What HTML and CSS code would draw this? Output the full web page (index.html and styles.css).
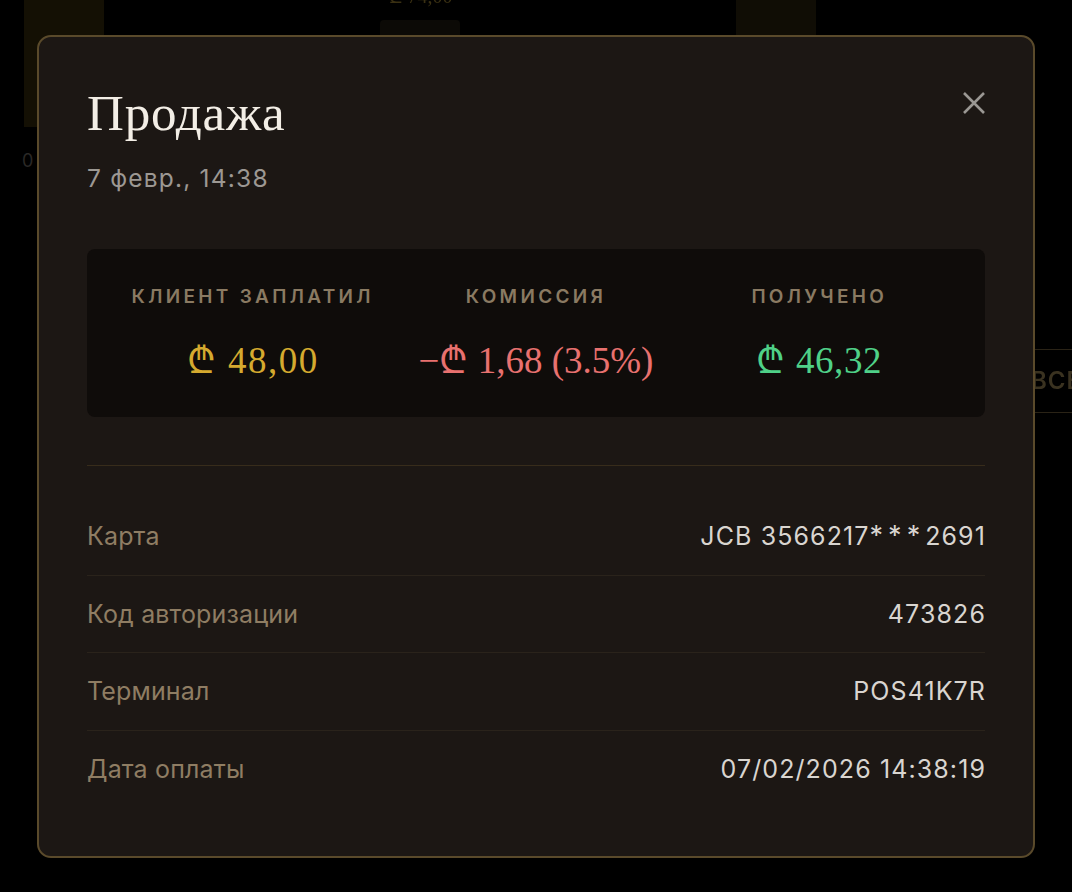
FILE: index.html
```html
<!DOCTYPE html>
<html lang="ru">
<head>
<meta charset="utf-8">
<title>Продажа</title>
<link rel="stylesheet" href="styles.css">
</head>
<body>
<div class="backdrop">
  <div class="chart">
    <div class="bar bar-a"></div>
    <div class="bar-label">₾ 74,00</div>
    <div class="bar bar-b"></div>
    <div class="bar bar-c"></div>
    <div class="axis">0</div>
  </div>
  <div class="bg-button">ВСЕ</div>
</div>

<div class="modal" role="dialog" aria-label="Продажа">
  <div class="modal-head">
    <div class="titles">
      <h1 class="title">Продажа</h1>
      <div class="subtitle">7 февр., 14:38</div>
    </div>
    <button class="close" aria-label="Закрыть">
      <svg width="24" height="24" viewBox="0 0 24 24"><path d="M2 2 L22 22 M22 2 L2 22" stroke="currentColor" stroke-width="2.6" fill="none"/></svg>
    </button>
  </div>

  <div class="stats">
    <div class="stat">
      <div class="stat-label">Клиент заплатил</div>
      <div class="stat-value gold">₾ 48,00</div>
    </div>
    <div class="stat">
      <div class="stat-label">Комиссия</div>
      <div class="stat-value red">−₾ 1,68 (3.5%)</div>
    </div>
    <div class="stat">
      <div class="stat-label">Получено</div>
      <div class="stat-value green">₾ 46,32</div>
    </div>
  </div>

  <div class="divider"></div>

  <div class="rows">
    <div class="row"><span class="row-label">Карта</span><span class="row-value">JCB 3566217<span class="mask">***</span>2691</span></div>
    <div class="row"><span class="row-label">Код авторизации</span><span class="row-value">473826</span></div>
    <div class="row"><span class="row-label">Терминал</span><span class="row-value">POS41K7R</span></div>
    <div class="row"><span class="row-label">Дата оплаты</span><span class="row-value">07/02/2026 14:38:19</span></div>
  </div>
</div>
</body>
</html>
```

FILE: styles.css
```css
* { box-sizing: border-box; }

html, body {
  margin: 0;
  padding: 0;
  background: #000;
  width: 1072px;
  height: 892px;
  overflow: hidden;
  font-family: "Inter", "Liberation Sans", sans-serif;
}

.backdrop {
  position: fixed;
  inset: 0;
  background: #000;
}

.chart { position: absolute; inset: 0; }

.bar {
  position: absolute;
  top: 0;
  width: 80px;
  background: #141004;
}
.bar-a { left: 24px; height: 127px; }
.bar-b { left: 380px; top: 20px; height: 16px; background: #0c0a06; border-radius: 4px 4px 0 0; }
.bar-c { left: 736px; height: 40px; background: #100d05; }

.bar-label {
  position: absolute;
  left: 380px;
  top: -18px;
  width: 80px;
  text-align: center;
  font-family: "Liberation Serif", serif;
  font-size: 20px;
  color: #3a3012;
}

.axis {
  position: absolute;
  left: 22px;
  top: 150px;
  font-size: 18px;
  color: #2a2826;
}

.bg-button {
  position: absolute;
  left: 1020px;
  top: 349px;
  width: 120px;
  height: 64px;
  border: 1px solid #2a2316;
  border-radius: 8px;
  padding-left: 10px;
  line-height: 62px;
  font-size: 24px;
  font-weight: 600;
  letter-spacing: 1px;
  color: #3a3220;
}

.modal {
  position: fixed;
  left: 37px;
  top: 35px;
  width: 998px;
  background: #1c1714;
  border: 2px solid #5a4a2b;
  border-radius: 14px;
  padding: 48px 48px 49px;
}

.modal-head {
  display: flex;
  justify-content: space-between;
  align-items: flex-start;
}

.title {
  margin: 0;
  font-family: "Liberation Serif", "DejaVu Serif", serif;
  font-weight: 400;
  font-size: 51px;
  line-height: 56px;
  letter-spacing: 0.8px;
  color: #f3eee6;
}

.subtitle {
  margin-top: 23px;
  font-size: 24.5px;
  line-height: 29px;
  letter-spacing: 1.2px;
  color: #9c9893;
}

.close {
  margin-top: 6px;
  margin-right: -1px;
  padding: 0;
  width: 24px;
  height: 24px;
  border: 0;
  background: none;
  color: #9a9793;
  display: flex;
}

.stats {
  margin-top: 56px;
  background: #0f0c0a;
  border-radius: 8px;
  padding: 36px 24px;
  display: grid;
  grid-template-columns: repeat(3, 1fr);
}

.stat {
  display: flex;
  flex-direction: column;
  align-items: center;
  gap: 31px;
}

.stat-label {
  font-size: 19px;
  line-height: 24px;
  font-weight: 600;
  letter-spacing: 3.3px;
  text-transform: uppercase;
  color: #8a7a62;
}

.stat-value {
  font-family: "Liberation Serif", "DejaVu Serif", serif;
  font-size: 37px;
  line-height: 41px;
  white-space: nowrap;
}
.gold { color: #d5aa2f; letter-spacing: 1.5px; }
.red { color: #e8716f; }
.green { color: #4fd188; letter-spacing: 0.6px; }

.divider {
  margin-top: 48px;
  height: 1px;
  background: #372c1b;
}

.rows { margin-top: 32px; }

.row {
  display: flex;
  justify-content: space-between;
  align-items: baseline;
  padding: 24px 0;
  font-size: 25px;
  line-height: 28.5px;
  border-bottom: 1px solid #2a231b;
}
.row:last-child { border-bottom: 0; }

.row-label { color: #8f7d63; letter-spacing: 0.15px; }
.row-value { color: #d9d5d0; letter-spacing: 1.1px; margin-right: -1px; }
.mask { letter-spacing: 5px; font-size: 27px; }
```
